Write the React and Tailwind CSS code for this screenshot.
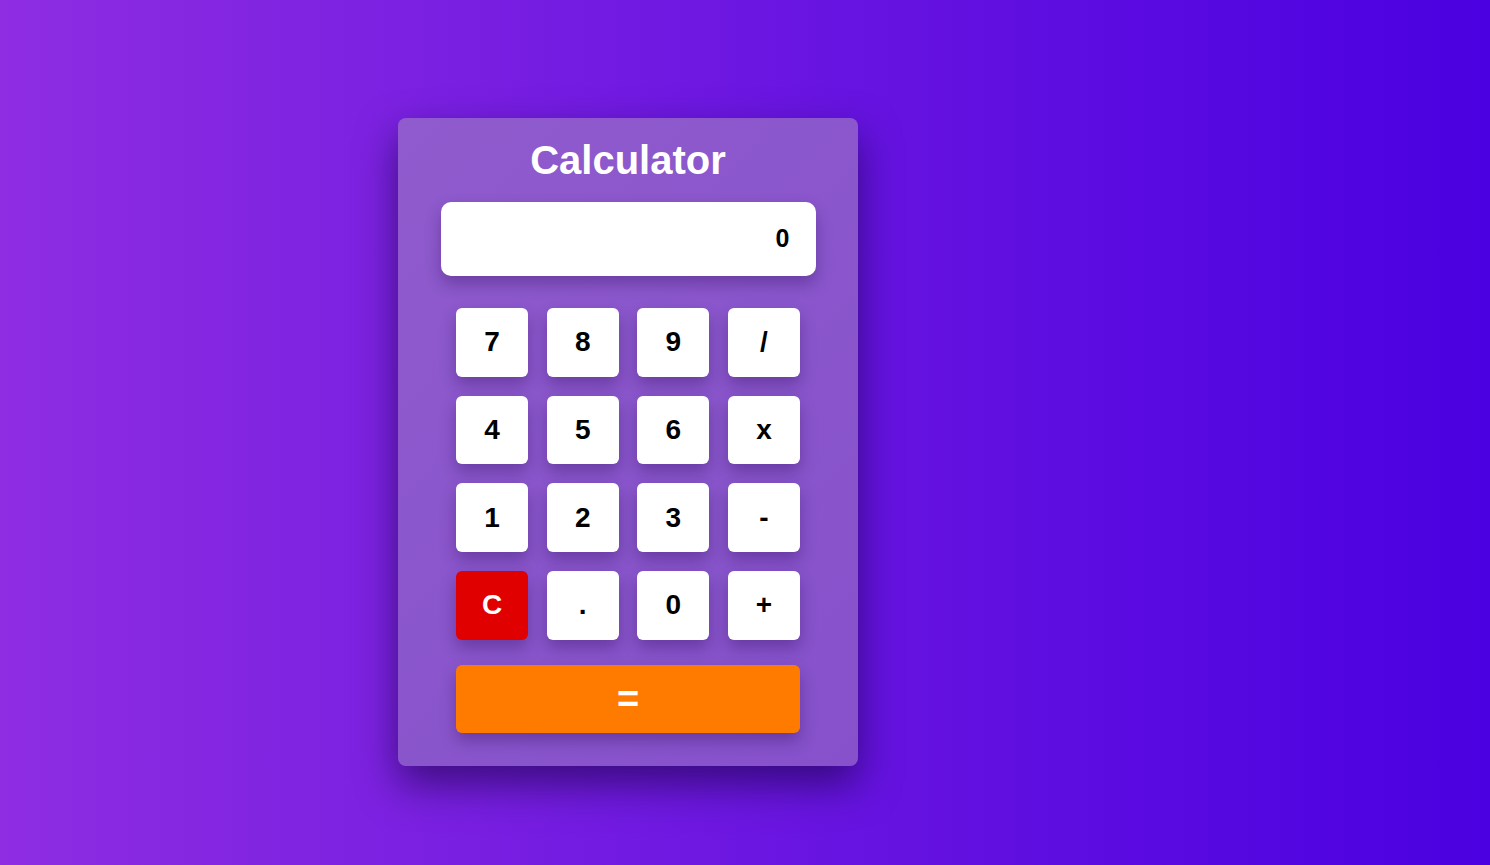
import { useState } from 'react';

const KEYS = ['7', '8', '9', '/', '4', '5', '6', 'x', '1', '2', '3', '-', 'C', '.', '0', '+'];

function Key({ label, onPress }) {
  const isClear = label === 'C';
  return (
    <button
      type="button"
      onClick={() => onPress(label)}
      className={
        isClear
          ? 'h-[68.7px] rounded-[6px] bg-[#e10000] text-white text-[28px] font-bold shadow-[0_8px_16px_rgba(30,0,70,0.3)] cursor-pointer'
          : 'h-[68.7px] rounded-[6px] bg-white text-black text-[28px] font-bold shadow-[0_8px_16px_rgba(30,0,70,0.3)] cursor-pointer'
      }
    >
      {label}
    </button>
  );
}

export default function App() {
  const [display, setDisplay] = useState('0');

  function handlePress(key) {
    if (key === 'C') {
      setDisplay('0');
      return;
    }
    setDisplay(d => (d === '0' && key !== '.' ? key : d + key));
  }

  function handleEquals() {
    try {
      const expr = display.replace(/x/g, '*');
      // eslint-disable-next-line no-new-func
      const result = Function(`return (${expr})`)();
      setDisplay(String(result));
    } catch {
      setDisplay('Error');
    }
  }

  return (
    <main
      className="min-h-screen w-full bg-[linear-gradient(to_right,#8e2de2,#4a00e0)] pt-[118px] pl-[398px]"
      style={{ fontFamily: '"Liberation Sans", Arial, sans-serif' }}
    >
      <div className="w-[460px] rounded-[8px] bg-[linear-gradient(135deg,#8f5bcd,#8651cb)] shadow-[0_18px_40px_rgba(20,0,60,0.6)] pt-[19px] pb-[33px] flex flex-col items-center">
        <h1 className="text-[40px] leading-[46px] font-bold text-white">Calculator</h1>

        {/* Display */}
        <div className="mt-[19px] w-[375px] h-[74px] rounded-[10px] bg-white shadow-[0_8px_16px_rgba(30,0,70,0.3)] flex items-center justify-end pr-[26px]">
          <span className="text-[25px] font-bold text-black">{display}</span>
        </div>

        {/* Keypad */}
        <div className="mt-[32px] w-[344px] grid grid-cols-4 gap-x-[18.67px] gap-y-[19px]">
          {KEYS.map(k => (
            <Key key={k} label={k} onPress={handlePress} />
          ))}
        </div>

        <button
          type="button"
          onClick={handleEquals}
          className="mt-[25px] w-[344px] h-[68px] rounded-[6px] bg-[#ff7b00] text-white text-[38px] leading-none font-bold shadow-[0_8px_16px_rgba(30,0,70,0.3)] cursor-pointer"
        >
          =
        </button>
      </div>
    </main>
  );
}
